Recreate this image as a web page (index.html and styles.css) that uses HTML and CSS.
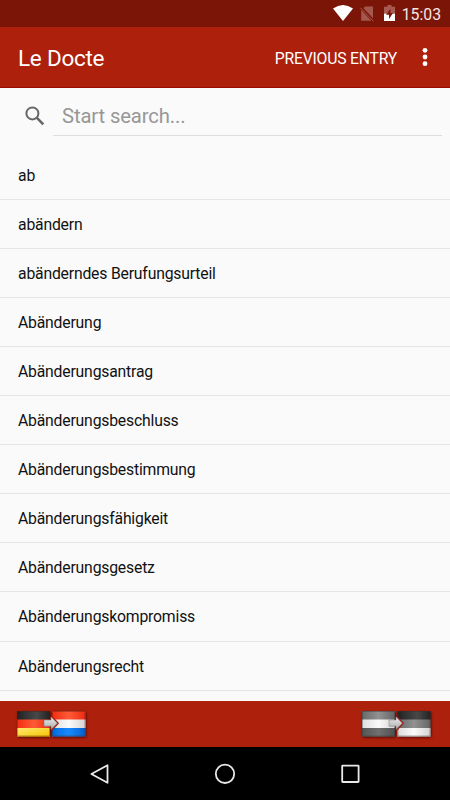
FILE: index.html
```
<!DOCTYPE html>
<html lang="de">
<head>
  <meta charset="utf-8">
  <title>Le Docte</title>
  <link rel="stylesheet" href="styles.css">
</head>
<body>
  <div class="status">
    <svg class="wifi" width="20" height="17" viewBox="0 0 20 17"><path d="M0 3.6Q10 -3.4 20 3.6L10 16Z" fill="#fff"/></svg>
    <svg class="sim" width="14" height="16" viewBox="0 0 14 16">
      <path d="M5 .5H13V12.2L3.5 2.2ZM1.2 4L11.3 14.8H1.2Z" fill="#a4574c"/>
      <path d="M.4 1.8L13.6 15.4" stroke="#a4574c" stroke-width="1"/>
    </svg>
    <svg class="battery" width="11" height="17" viewBox="0 0 11 17">
      <path d="M3.5 0h4v1.7H11V9H0V1.7h3.5Z" fill="#a85b50"/>
      <path d="M0 8.7h11V16H0Z" fill="#fff"/>
      <path d="M6.5 3.8L2 9.8h3v4.2L9 8H6.5Z" fill="#7a1508"/>
    </svg>
    <span class="time">15:03</span>
  </div>

  <div class="toolbar">
    <h1>Le Docte</h1>
    <span class="previous">PREVIOUS ENTRY</span>
    <svg class="more" width="6" height="20" viewBox="0 0 6 20" fill="#fff"><circle cx="3" cy="3.3" r="2.4"/><circle cx="3" cy="10" r="2.4"/><circle cx="3" cy="16.7" r="2.4"/></svg>
  </div>

  <div class="content">
    <div class="search">
      <svg width="20" height="20" viewBox="0 0 20 20" fill="none" stroke="#666"><circle cx="7.4" cy="7.4" r="6" stroke-width="2"/><path d="M11.7 11.7L18.3 18.3" stroke-width="2.6"/></svg>
      <div class="field">Start search...</div>
    </div>
    <ul class="entries">
      <li>ab</li>
      <li>abändern</li>
      <li>abänderndes Berufungsurteil</li>
      <li>Abänderung</li>
      <li>Abänderungsantrag</li>
      <li>Abänderungsbeschluss</li>
      <li>Abänderungsbestimmung</li>
      <li>Abänderungsfähigkeit</li>
      <li>Abänderungsgesetz</li>
      <li>Abänderungskompromiss</li>
      <li>Abänderungsrecht</li>
    </ul>
  </div>

  <div class="languages">
    <svg class="flags" width="74" height="32" viewBox="0 0 74 32">
      <defs>
        <linearGradient id="black" x2="1" y2="0"><stop stop-color="#222"/><stop offset=".6" stop-color="#484848"/><stop offset="1" stop-color="#222"/></linearGradient>
        <linearGradient id="red" x2="1" y2="0"><stop stop-color="#f22c12"/><stop offset=".5" stop-color="#ff5b36"/><stop offset="1" stop-color="#ed2b10"/></linearGradient>
        <linearGradient id="gold" x2="1" y2="1"><stop stop-color="#ffe970"/><stop offset="1" stop-color="#f6c500"/></linearGradient>
        <linearGradient id="white" x2="1" y2="0"><stop stop-color="#ddd"/><stop offset=".5" stop-color="#fafafa"/><stop offset="1" stop-color="#d4d4d4"/></linearGradient>
        <linearGradient id="blue" x2="1" y2="0"><stop stop-color="#006bdc"/><stop offset=".5" stop-color="#188aff"/><stop offset="1" stop-color="#0061cf"/></linearGradient>
        <linearGradient id="arrow" x2="0" y2="1"><stop stop-color="#eee"/><stop offset="1" stop-color="#aaa"/></linearGradient>
        <filter id="shadow" x="-10%" y="-15%" width="120%" height="140%"><feDropShadow dx=".7" dy="1" stdDeviation=".8" flood-color="#320500" flood-opacity=".8"/></filter>
      </defs>
      <g filter="url(#shadow)">
        <path d="M2 3h33v9H2Z" fill="url(#black)"/><path d="M2 11.5h33v8.5H2Z" fill="url(#red)"/><path d="M2 20h33v8.5H2Z" fill="url(#gold)"/>
        <path d="M37 3h33.5v9H37Z" fill="url(#red)"/><path d="M37 11.5h33.5v8.5H37Z" fill="url(#white)"/><path d="M37 20h33.5v8.5H37Z" fill="url(#blue)"/>
      </g>
      <path d="M2.5 3.5h32v24.5h-32ZM37.5 3.5h32.5v24.5h-32.5Z" fill="none" stroke="#512015" stroke-opacity=".4"/>
      <path d="M37 9L43 15.2L37 21.8" fill="none" stroke="#a51c0c" stroke-width="1.6"/>
      <path d="M29 12h7V8.8l6.3 6.4l-6.3 6.3v-3.3h-7Z" fill="url(#arrow)" stroke="#777" stroke-width=".5"/>
    </svg>
    <svg class="flags" width="74" height="32" viewBox="0 0 74 32">
      <defs>
        <linearGradient id="grey" x2="1" y2="0"><stop stop-color="#686868"/><stop offset=".5" stop-color="#929292"/><stop offset="1" stop-color="#646464"/></linearGradient>
        <linearGradient id="dark" x2="1" y2="0"><stop stop-color="#555"/><stop offset=".5" stop-color="#707070"/><stop offset="1" stop-color="#505050"/></linearGradient>
      </defs>
      <g filter="url(#shadow)">
        <path d="M2 3h33v9H2Z" fill="url(#grey)"/><path d="M2 11.5h33v8.5H2Z" fill="url(#white)"/><path d="M2 20h33v8.5H2Z" fill="url(#dark)"/>
        <path d="M37.5 3h33v9h-33Z" fill="url(#black)"/><path d="M37.5 11.5h33v8.5h-33Z" fill="url(#grey)"/><path d="M37.5 20h33v8.5h-33Z" fill="url(#white)"/>
      </g>
      <path d="M2.5 3.5h32v24.5h-32ZM38 3.5h32v24.5h-32Z" fill="none" stroke="#333" stroke-opacity=".4"/>
      <path d="M37 9L43 15.2L37 21.8" fill="none" stroke="#a51c0c" stroke-width="1.6"/>
      <path d="M29 12h7V8.8l6.3 6.4l-6.3 6.3v-3.3h-7Z" fill="url(#arrow)" stroke="#777" stroke-width=".5"/>
    </svg>
  </div>

  <div class="navigation">
    <svg width="22" height="22" viewBox="0 0 22 22"><path d="M18.5 2.2V19.8L2.4 11Z"/></svg>
    <svg width="22" height="22" viewBox="0 0 22 22"><circle cx="11" cy="10.8" r="9.2"/></svg>
    <svg width="22" height="22" viewBox="0 0 22 22"><rect x="3.2" y="2.6" width="16.4" height="16.4" rx=".5"/></svg>
  </div>
</body>
</html>
```
FILE: styles.css
```
body {
  margin: 0;
  height: 800px;
  display: flex;
  flex-direction: column;
  overflow: hidden;
  background-color: #fafafa;
  font-family: Roboto, sans-serif;
}

svg {
  display: block;
  flex-shrink: 0;
}

.status {
  height: 27px;
  box-sizing: border-box;
  padding: 0 9px 0 0;
  display: flex;
  align-items: center;
  justify-content: flex-end;
  background-color: #7a1508;
  color: #f3e7e6;
}

.sim {
  margin-left: 7px;
}

.battery {
  margin-left: 10px;
}

.time {
  margin: 1px 0 0 7px;
  font-size: 15.75px;
}

.toolbar {
  height: 61px;
  box-sizing: border-box;
  padding: 0 22px 0 18px;
  display: flex;
  align-items: center;
  background-color: #ad200c;
  border-bottom: 1px solid #990d05;
  color: #fff;
}

.toolbar h1 {
  margin: 2px 0 0;
  flex-grow: 1;
  font-size: 22.5px;
  font-weight: 400;
  letter-spacing: -0.25px;
}

.previous {
  margin-top: 2px;
  font-size: 15.75px;
  letter-spacing: -0.23px;
}

.more {
  margin-left: 25px;
}

.content {
  height: 613px;
  overflow: hidden;
}

.search {
  height: 48px;
  padding: 0 8px 0 25px;
  display: flex;
}

.search svg {
  margin-top: 18px;
}

.field {
  flex-grow: 1;
  margin-left: 8px;
  padding: 7px 0 0 9px;
  box-sizing: border-box;
  border-bottom: 1px solid #dedede;
  color: #979797;
  font-size: 20.25px;
  letter-spacing: -0.13px;
  line-height: 42px;
}

.entries {
  margin: 14.6px 0 0;
  padding: 0;
  list-style: none;
}

.entries li {
  height: 49.1px;
  box-sizing: border-box;
  padding-left: 18px;
  border-bottom: 1px solid #e6e6e6;
  color: #111;
  font-size: 15.75px;
  letter-spacing: -0.19px;
  line-height: 50px;
}

.languages {
  height: 46px;
  box-sizing: border-box;
  padding: 7px 16px 0 15px;
  display: flex;
  justify-content: space-between;
  background-color: #ad200c;
}

.navigation {
  height: 53px;
  display: flex;
  justify-content: center;
  align-items: center;
  gap: 103px;
  background-color: #000;
}

.navigation svg {
  fill: none;
  stroke: #e9e9e9;
  stroke-width: 1.8;
  stroke-linejoin: round;
}
```
